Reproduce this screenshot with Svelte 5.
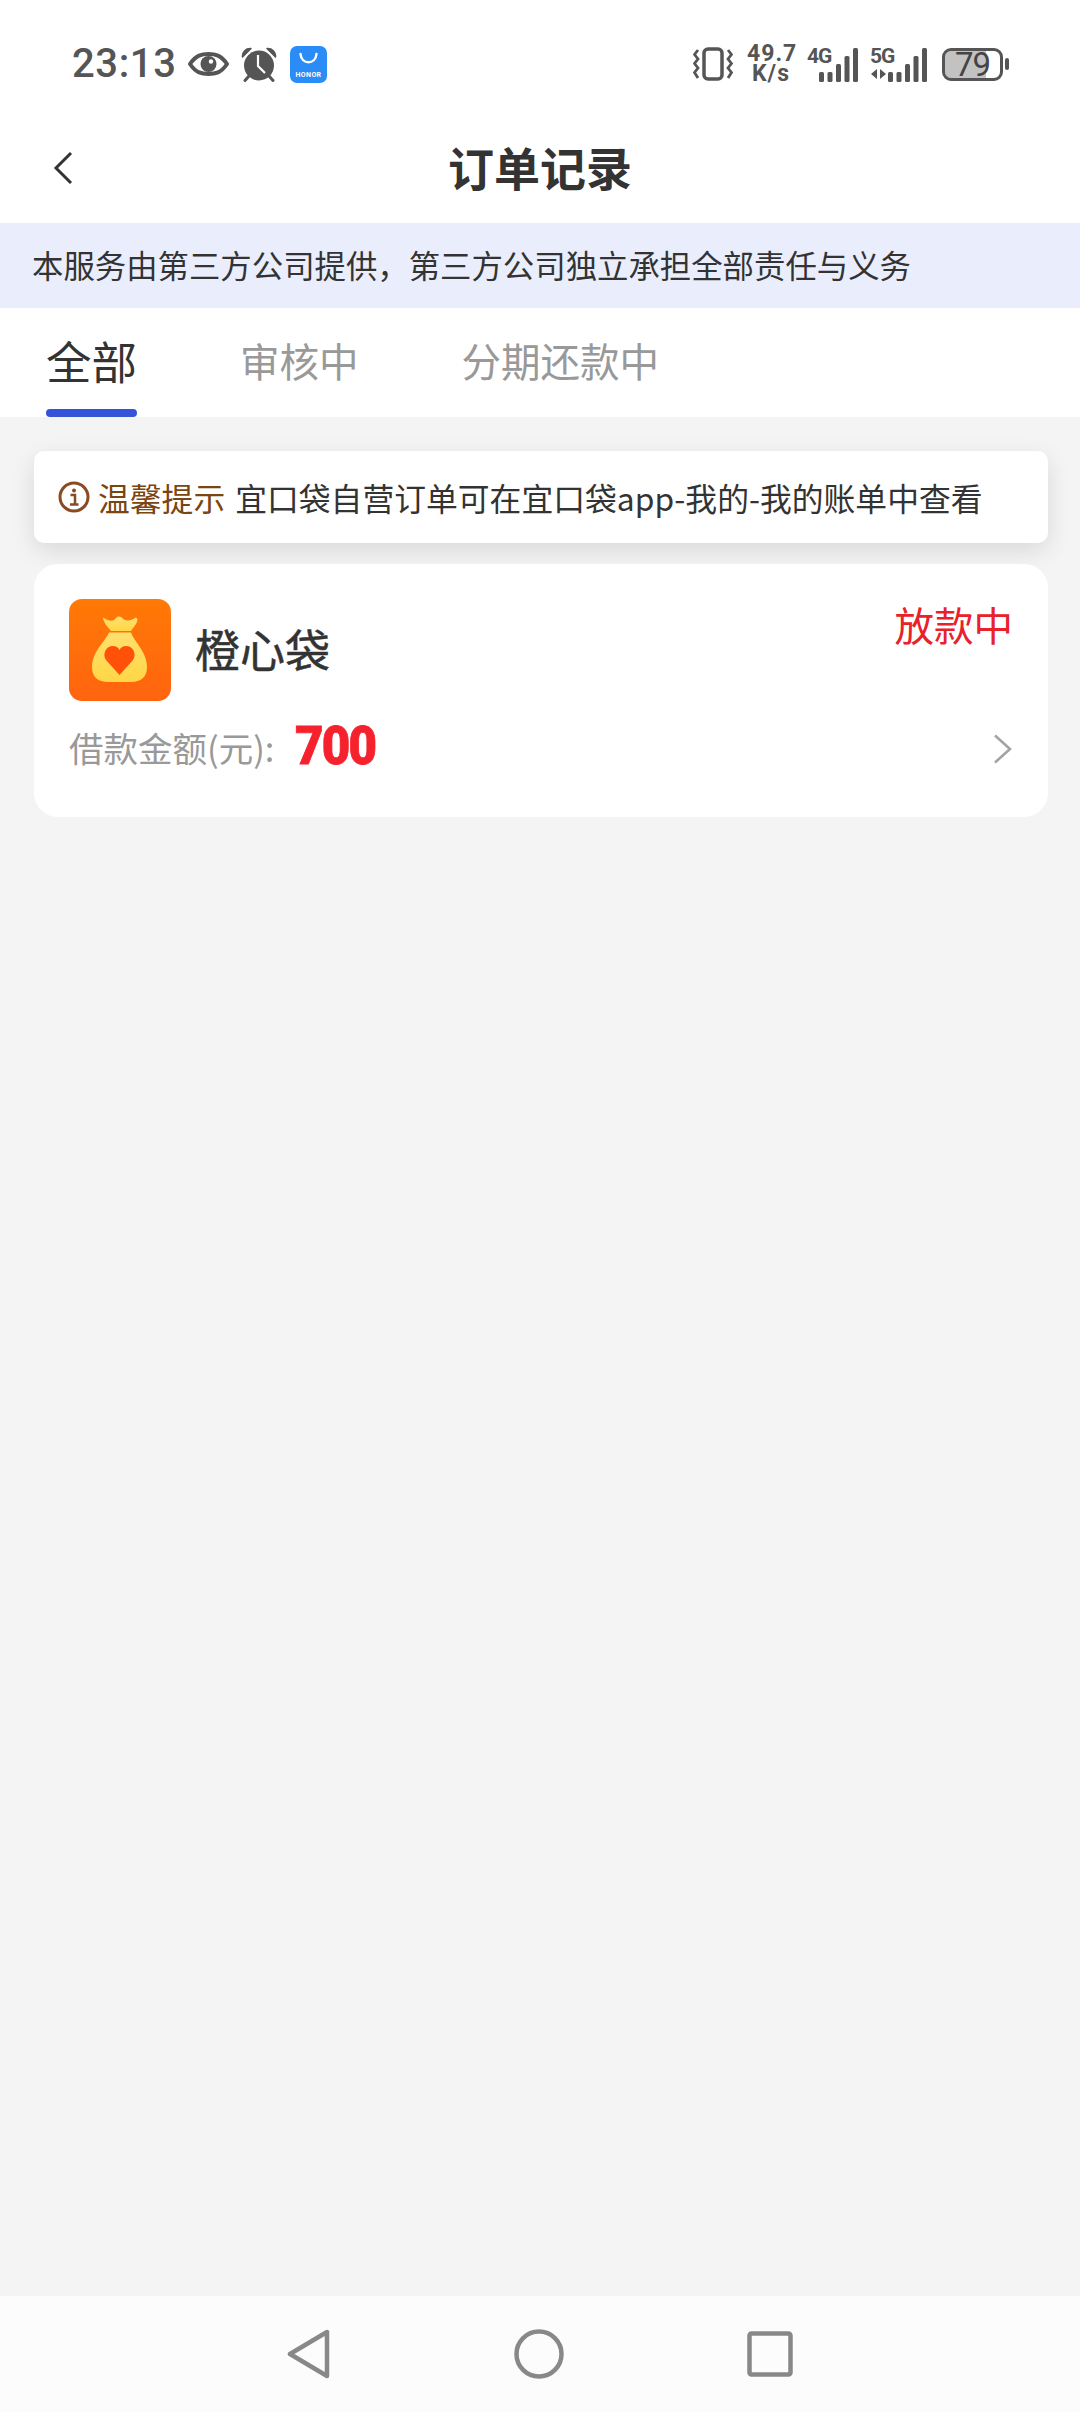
<script lang="ts">
	const tabs = ['全部', '审核中', '分期还款中'];
	let active = $state(0);
	const bars = [
		{ x: 0, h: 10 },
		{ x: 8.5, h: 10 },
		{ x: 17, h: 18 },
		{ x: 25.5, h: 26 },
		{ x: 34, h: 34 }
	];
</script>

<div class="page">
	<div class="status-bar">
		<div class="status-left">
			<span class="time">23:13</span>
			<svg class="eye" width="41" height="24" viewBox="0 0 41 24">
				<path d="M2 12 C8 3 14 2 20.500 2 C27 2 33 3 39 12 C33 21 27 22 20.500 22 C14 22 8 21 2 12Z" fill="none" stroke="#555" stroke-width="4" />
				<circle cx="20.500" cy="12" r="8" fill="#555" />
				<circle cx="23" cy="9.500" r="2.200" fill="#fff" />
			</svg>
			<svg class="alarm" width="36" height="35" viewBox="0 0 36 35">
				<circle cx="18" cy="18.500" r="15" fill="#555" />
				<path d="M1.500 10 C1 5 5 1 10 1.500Z M34.500 10 C35 5 31 1 26 1.500Z" fill="#555" stroke="#555" stroke-width="1.500" stroke-linejoin="round" />
				<path d="M8 29 L4 33.500 M28 29 L32 33.500" stroke="#555" stroke-width="3" stroke-linecap="round" />
				<path d="M17 8 V19 L24 26" fill="none" stroke="#fff" stroke-width="2.200" />
			</svg>
			<svg class="store" width="37" height="37" viewBox="0 0 37 37">
				<rect width="37" height="37" rx="7" fill="#2a8cf6" />
				<path d="M10.500 8 C11.500 19 25.500 19 26.500 8" fill="none" stroke="#fff" stroke-width="2.500" stroke-linecap="round" />
				<text x="18.500" y="31" text-anchor="middle" class="store-text">HONOR</text>
			</svg>
		</div>
		<div class="status-right">
			<svg class="vibrate" width="40" height="34" viewBox="0 0 40 34">
				<rect x="11" y="2" width="18" height="30" rx="4" fill="none" stroke="#555" stroke-width="3.500" />
				<path d="M5 3 L1.500 7.500 L5 12 L1.500 16.500 L5 21 L1.500 25.500 L5 31 M35 3 L38.500 7.500 L35 12 L38.500 16.500 L35 21 L38.500 25.500 L35 31" fill="none" stroke="#555" stroke-width="2.800" />
			</svg>
			<div class="speed">49.7 K/s</div>
			<svg class="signal" width="51" height="35" viewBox="0 0 51 35">
				<text x="0" y="16" class="net">4G</text>
				{#each bars as b}
					<rect x={12 + b.x} y={35 - b.h} width="5" height={b.h} rx="1.500" fill="#555" />
				{/each}
			</svg>
			<svg class="signal five" width="57" height="35" viewBox="0 0 57 35">
				<text x="0" y="16" class="net">5G</text>
				<path d="M7 22 L1 27 L7 32Z M10 22 L16 27 L10 32Z" fill="#555" />
				{#each bars as b}
					<rect x={18 + b.x} y={35 - b.h} width="5" height={b.h} rx="1.500" fill="#555" />
				{/each}
			</svg>
			<div class="battery">
				<div class="cell"><span>79</span></div>
				<i class="tip"></i>
			</div>
		</div>
	</div>

	<header class="title-bar">
		<svg class="back" width="20" height="34" viewBox="0 0 20 34">
			<path d="M18 2 L3 17 L18 32" fill="none" stroke="#333" stroke-width="3" />
		</svg>
		<h1>订单记录</h1>
	</header>

	<div class="banner">本服务由第三方公司提供，第三方公司独立承担全部责任与义务</div>

	<nav class="tabs">
		{#each tabs as tab, i}
			<button class="tab" class:active={active === i} onclick={() => (active = i)}>
				<span>{tab}</span>
				{#if active === i}<i class="indicator"></i>{/if}
			</button>
		{/each}
	</nav>

	<main class="content">
		<div class="notice">
			<svg width="32" height="32" viewBox="0 0 32 32">
				<circle cx="16" cy="16" r="14" fill="none" stroke="#8a4a22" stroke-width="3" />
				<circle cx="16" cy="9.500" r="2" fill="#8a4a22" />
				<path d="M12.500 14 H17 V23 M12 23.500 H20.500" fill="none" stroke="#8a4a22" stroke-width="2.500" />
			</svg>
			<span class="notice-label">温馨提示</span>
			<span class="notice-text">宜口袋自营订单可在宜口袋app-我的-我的账单中查看</span>
		</div>

		<section class="order">
			<div class="order-head">
				<svg class="logo" width="102" height="102" viewBox="0 0 102 102">
					<defs>
						<linearGradient id="logoBg" x1="0" y1="0" x2="0" y2="1">
							<stop offset="0" stop-color="#ff7a06" />
							<stop offset="1" stop-color="#ff630f" />
						</linearGradient>
						<linearGradient id="bagFill" x1="0" y1="0" x2="0" y2="1">
							<stop offset="0" stop-color="#ffe06e" />
							<stop offset="1" stop-color="#ffd644" />
						</linearGradient>
					</defs>
					<rect width="102" height="102" rx="13" fill="url(#logoBg)" />
					<path d="M35 19 C41 23 45 22 47 19 C49 17 52 17 54 20 C57 22 62 22 66 19 C69 18 69 22 67 25 L62 32 H42 L37 26 C35 23 33 18 35 19Z" fill="url(#bagFill)" />
					<path d="M40 33.500 H62 C66 44 78 53 78 68 C78 78 72 83 62 83 H39 C29 83 23 78 23 68 C23 53 35 44 40 33.500Z" fill="url(#bagFill)" />
					<path d="M50.500 76 L37 61 C33 55 37 47 44 47 C47 47 49 48 50.500 51 C52 48 54 47 57 47 C64 47 68 55 64 61Z" fill="#ff5208" />
				</svg>
				<span class="name">橙心袋</span>
				<span class="state">放款中</span>
			</div>
			<div class="order-foot">
				<span class="amount-label">借款金额(元):</span>
				<span class="amount">700</span>
				<svg class="chevron" width="20" height="30" viewBox="0 0 20 30">
					<path d="M2 1.500 L17 15 L2 28.500" fill="none" stroke="#a3a3a3" stroke-width="2.600" />
				</svg>
			</div>
		</section>
	</main>

	<div class="nav-bar">
		<svg width="44" height="50" viewBox="0 0 44 50">
			<path d="M40 3 V47 L3 25Z" fill="none" stroke="#888" stroke-width="4.500" stroke-linejoin="round" />
		</svg>
		<svg width="50" height="50" viewBox="0 0 50 50">
			<circle cx="25" cy="25" r="22.500" fill="none" stroke="#888" stroke-width="4.500" />
		</svg>
		<svg width="46" height="46" viewBox="0 0 46 46">
			<rect x="2.500" y="2.500" width="41" height="41" rx="2" fill="none" stroke="#888" stroke-width="4.500" />
		</svg>
	</div>
</div>

<style>
	:global(body) {
		margin: 0;
		background: #f4f4f5;
	}
	.page {
		display: flex;
		flex-direction: column;
		min-height: 2412px;
		font-family: "Noto Sans CJK SC", "Noto Sans", sans-serif;
		color: #333;
	}
	svg {
		display: block;
		flex-shrink: 0;
	}
	.status-bar {
		display: flex;
		justify-content: space-between;
		align-items: center;
		height: 128px;
		box-sizing: border-box;
		padding: 0 71px 0 72px;
		background: #fff;
		margin-bottom: -15px;
	}
	.status-left,
	.status-right {
		display: flex;
		align-items: center;
	}
	.time {
		font-family: Roboto, sans-serif;
		font-weight: 500;
		font-size: 40px;
		letter-spacing: 0.6px;
		color: #555;
		line-height: 40px;
	}
	.eye {
		margin-left: 12px;
	}
	.alarm {
		margin-left: 12px;
	}
	.store {
		margin-left: 13px;
	}
	.store-text {
		font: 700 7px Roboto, sans-serif;
		fill: #fff;
		letter-spacing: 0.4px;
	}
	.speed {
		width: 48px;
		margin: 0 12px 0 14px;
		font: 700 23px/20px Roboto, sans-serif;
		letter-spacing: 1px;
		text-align: center;
		color: #555;
	}
	.signal {
		overflow: visible;
	}
	.five {
		margin: 0 15px 0 12px;
	}
	.net {
		font: 700 21px Roboto, sans-serif;
		fill: #555;
		letter-spacing: -1px;
	}
	.battery {
		display: flex;
		align-items: center;
		gap: 2px;
	}
	.cell {
		display: flex;
		align-items: center;
		justify-content: center;
		width: 61px;
		height: 33px;
		box-sizing: border-box;
		border: 3px solid #555;
		border-radius: 9px;
		background: linear-gradient(to right, #c2c2c2 74%, transparent 74%);
		background-clip: padding-box;
		font: 400 33px/27px Roboto, sans-serif;
		letter-spacing: -1px;
		color: #444;
	}
	.tip {
		width: 4px;
		height: 12px;
		border-radius: 2px;
		background: #555;
	}
	.title-bar {
		display: flex;
		align-items: center;
		justify-content: center;
		position: relative;
		height: 110px;
		padding-bottom: 5px;
		box-sizing: border-box;
		background: #fff;
	}
	.back {
		position: absolute;
		left: 53px;
		top: 38px;
	}
	h1 {
		margin: 0;
		font-size: 46px;
		font-weight: 700;
		color: #333;
	}
	.banner {
		height: 85px;
		box-sizing: border-box;
		padding-left: 32px;
		background: #eaeefc;
		font-size: 31.400px;
		line-height: 83px;
		color: #333;
		white-space: nowrap;
	}
	.tabs {
		display: flex;
		gap: 103px;
		height: 109px;
		padding-left: 46px;
		background: #fff;
	}
	.tab {
		display: flex;
		flex-direction: column;
		align-items: center;
		padding: 18px 0 0;
		border: 0;
		background: none;
		font-family: inherit;
		font-size: 39.500px;
		line-height: 68px;
		color: #999;
	}
	.tab.active {
		font-size: 45.500px;
		color: #333;
	}
	.indicator {
		display: block;
		width: 100%;
		height: 8px;
		margin-top: auto;
		border-radius: 4px;
		background: #3553d8;
	}
	.content {
		flex: 1;
		display: flex;
		flex-direction: column;
		gap: 21px;
		padding: 34px 32px 0 34px;
	}
	.notice {
		display: flex;
		align-items: center;
		height: 92px;
		box-sizing: border-box;
		padding-left: 24px;
		border-radius: 10px;
		background: #fff;
		box-shadow: 0 8px 24px rgba(0, 0, 0, 0.11);
		font-size: 31.800px;
		white-space: nowrap;
	}
	.notice-label {
		margin-left: 8px;
		color: #7a4510;
	}
	.notice-text {
		margin-left: 10px;
		color: #333;
	}
	.order {
		height: 253px;
		box-sizing: border-box;
		padding: 35px 35px 0;
		border-radius: 24px;
		background: #fff;
	}
	.order-head {
		display: flex;
		align-items: center;
	}
	.logo {
		margin-right: 24px;
	}
	.name {
		font-size: 45px;
		line-height: 60px;
		margin-top: -3px;
		color: #333;
		-webkit-text-stroke: 0.5px #333;
	}
	.state {
		align-self: flex-start;
		margin-left: auto;
		font-size: 39.500px;
		line-height: 50px;
		color: #e8212b;
	}
	.order-foot {
		display: flex;
		align-items: center;
		height: 48px;
		margin-top: 24px;
	}
	.amount-label {
		font-size: 34.500px;
		line-height: 48px;
		margin-top: -5px;
		color: #999;
	}
	.amount {
		margin-left: 21px;
		font-family: Roboto, sans-serif;
		font-weight: 900;
		font-size: 53px;
		line-height: 48px;
		margin-top: -7px;
		color: #f5222d;
		letter-spacing: -2px;
		transform: scaleX(0.93);
		transform-origin: left center;
		-webkit-text-stroke: 0.8px #f5222d;
	}
	.chevron {
		margin-left: auto;
	}
	.nav-bar {
		display: flex;
		align-items: center;
		justify-content: center;
		gap: 183px;
		height: 116px;
		background: #fcfcfc;
	}
</style>
